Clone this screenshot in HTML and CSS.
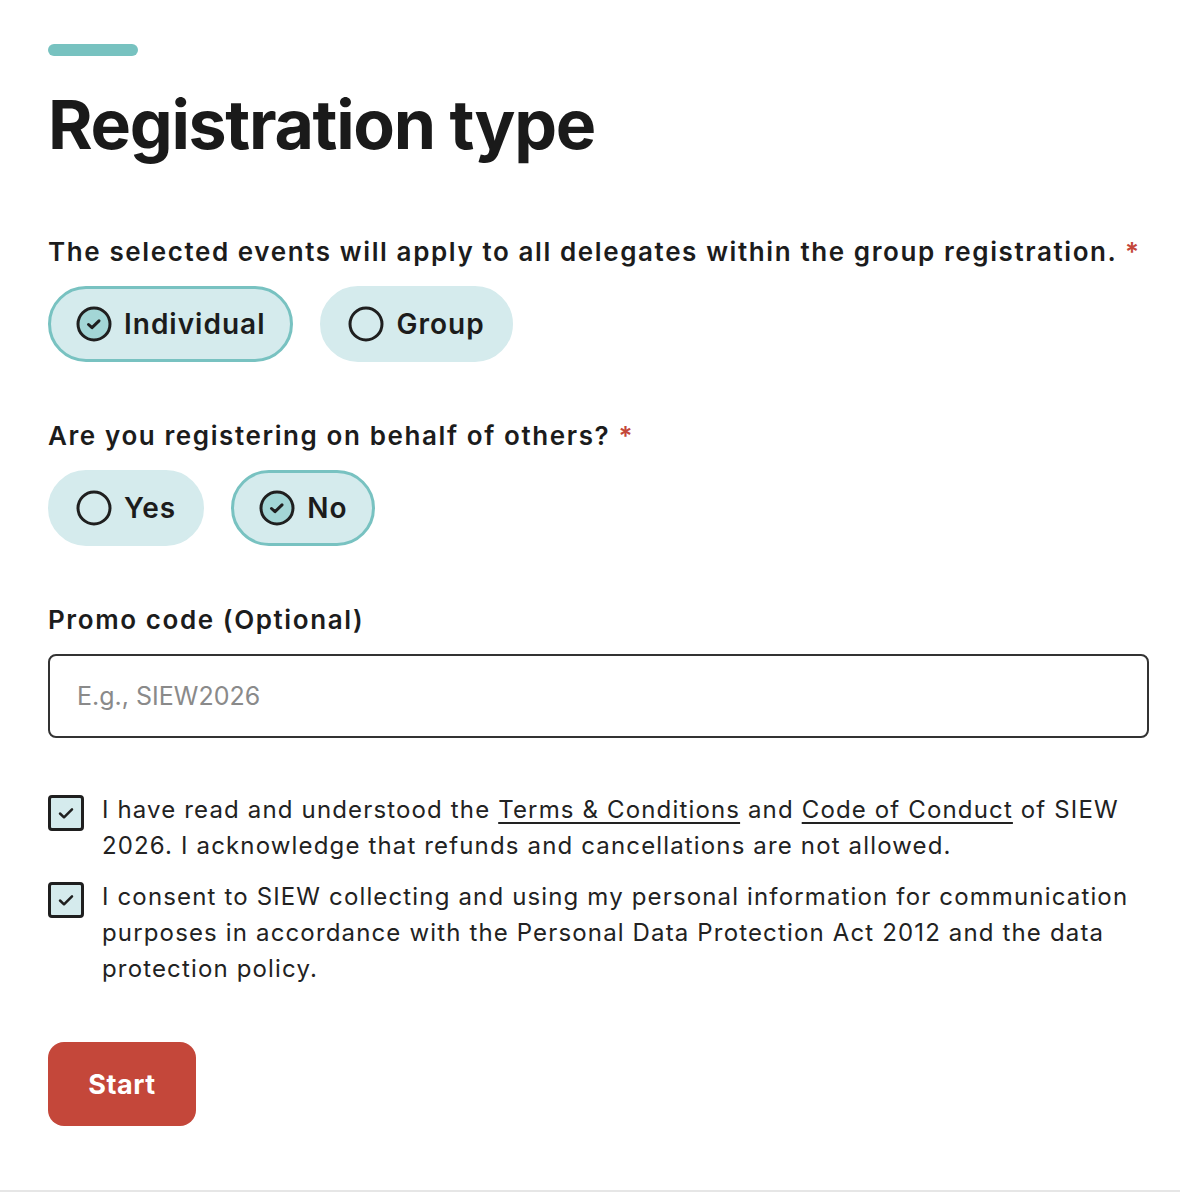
FILE: index.html
```html
<!DOCTYPE html>
<html lang="en">
<head>
    <meta charset="UTF-8">
    <meta name="viewport" content="width=device-width, initial-scale=1.0">
    <title>Registration type</title>
    <link rel="stylesheet" href="styles.css">
</head>
<body>
    <main class="form-page">
        <div class="accent"></div>
        <h1 class="title">Registration type</h1>

        <section class="field">
            <p class="field-label">The selected events will apply to all delegates within the group registration. <span class="req">*</span></p>
            <div class="options">
                <label class="pill is-checked">
                    <span class="radio">
                        <svg viewBox="0 0 36 36" width="36" height="36"><circle cx="18" cy="18" r="16" /><path d="M12.5 18.5l3.5 3.2 7-6.8" /></svg>
                    </span>
                    Individual
                </label>
                <label class="pill">
                    <span class="radio">
                        <svg viewBox="0 0 36 36" width="36" height="36"><circle cx="18" cy="18" r="16" /></svg>
                    </span>
                    Group
                </label>
            </div>
        </section>

        <section class="field">
            <p class="field-label">Are you registering on behalf of others? <span class="req">*</span></p>
            <div class="options">
                <label class="pill">
                    <span class="radio">
                        <svg viewBox="0 0 36 36" width="36" height="36"><circle cx="18" cy="18" r="16" /></svg>
                    </span>
                    Yes
                </label>
                <label class="pill is-checked">
                    <span class="radio">
                        <svg viewBox="0 0 36 36" width="36" height="36"><circle cx="18" cy="18" r="16" /><path d="M12.5 18.5l3.5 3.2 7-6.8" /></svg>
                    </span>
                    No
                </label>
            </div>
        </section>

        <section class="field">
            <p class="field-label">Promo code (Optional)</p>
            <input class="promo" type="text" placeholder="E.g., SIEW2026">
        </section>

        <div class="consents">
            <label class="consent">
                <span class="box">
                    <svg viewBox="0 0 30 30" width="30" height="30"><path d="M9 15.5l4 3.8 8-8" /></svg>
                </span>
                <span class="consent-text">I have read and understood the <a href="#">Terms &amp; Conditions</a> and <a href="#">Code of Conduct</a> of SIEW 2026. I acknowledge that refunds and cancellations are not allowed.</span>
            </label>
            <label class="consent">
                <span class="box">
                    <svg viewBox="0 0 30 30" width="30" height="30"><path d="M9 15.5l4 3.8 8-8" /></svg>
                </span>
                <span class="consent-text">I consent to SIEW collecting and using my personal information for communication purposes in accordance with the Personal Data Protection Act 2012 and the data protection policy.</span>
            </label>
        </div>

        <button class="start" type="button">Start</button>
    </main>
</body>
</html>
```

FILE: styles.css
```css
body {
    margin: 0;
    font-family: Inter, "Open Sans", sans-serif;
    color: #1c1c1c;
    background: #fff;
}

.form-page {
    height: 1192px;
    padding: 44px 31px 0 48px;
    box-sizing: border-box;
    border-bottom: 2px solid #e6e6e6;
}

.accent {
    width: 90px;
    height: 12px;
    border-radius: 6px;
    background: #77c2c0;
}

.title {
    margin: 28px 0 0;
    font-size: 68px;
    line-height: 80px;
    font-weight: 700;
    letter-spacing: -1.3px;
    color: #1a1a1a;
}

.field {
    margin-top: 70px;
}

.field + .field {
    margin-top: 56px;
}

.field-label {
    margin: 0;
    font-size: 26px;
    line-height: 36px;
    font-weight: 600;
    letter-spacing: 1.6px;
    color: #1c1c1c;
}

.req {
    color: #c4473a;
}

.options {
    display: flex;
    gap: 27px;
    margin-top: 16px;
}

.pill {
    display: flex;
    align-items: center;
    gap: 12px;
    height: 76px;
    padding: 0 25px 0 25px;
    box-sizing: border-box;
    border-radius: 38px;
    border: 3px solid #d5ebed;
    background: #d5ebed;
    font-size: 28px;
    font-weight: 600;
    letter-spacing: 1px;
    color: #1c1c1c;
    cursor: pointer;
}

.pill.is-checked {
    border-color: #78c2c1;
}

.radio svg {
    display: block;
    fill: none;
    stroke: #1f1f1f;
    stroke-width: 3;
    stroke-linecap: round;
    stroke-linejoin: round;
}

.pill.is-checked .radio circle {
    fill: #a3d6d6;
}

.promo {
    display: block;
    width: 100%;
    height: 84px;
    margin-top: 16px;
    padding: 0 27px;
    box-sizing: border-box;
    border: 2px solid #333;
    border-radius: 8px;
    font-family: inherit;
    font-size: 25px;
    color: #1c1c1c;
}

.promo::placeholder {
    color: #8a8a8a;
}

.consents {
    display: flex;
    flex-direction: column;
    gap: 15px;
    margin-top: 54px;
}

.consent {
    display: flex;
    gap: 18px;
    align-items: flex-start;
}

.box {
    flex: none;
    width: 36px;
    height: 36px;
    margin-top: 3px;
    box-sizing: border-box;
    border: 3px solid #1f1f1f;
    border-radius: 4px;
    background: #d5ebed;
}

.box svg {
    display: block;
    fill: none;
    stroke: #1f1f1f;
    stroke-width: 2.5;
    stroke-linecap: round;
    stroke-linejoin: round;
}

.consent-text {
    font-size: 24px;
    line-height: 36px;
    letter-spacing: 1.15px;
    color: #222;
}

.consent-text a {
    color: inherit;
    text-decoration: underline;
    text-underline-offset: 4px;
}

.start {
    margin-top: 55px;
    width: 148px;
    height: 84px;
    border: none;
    border-radius: 16px;
    background: #c4473a;
    color: #fff;
    font-family: inherit;
    font-size: 27px;
    font-weight: 700;
    letter-spacing: 0.5px;
    cursor: pointer;
}
```
